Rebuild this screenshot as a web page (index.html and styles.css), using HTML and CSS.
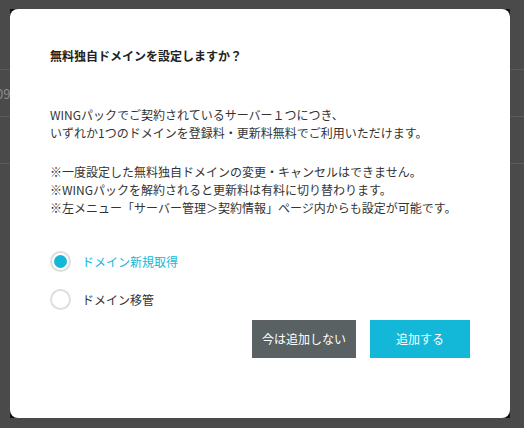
FILE: index.html
```html
<!DOCTYPE html>
<html>
    <head>
        <title>無料独自ドメイン設定</title>
        <meta charset="UTF-8">
        <link rel="stylesheet" href="styles.css">
    </head>
    <body>
        <div class="page">
            <div class="page-head"></div>
            <div class="page-row"><span class="cell">09:30</span></div>
            <div class="page-row"></div>
        </div>
        <div class="modal">
            <div class="modal-inner">
                <h2 class="modal-title">無料独自ドメインを設定しますか？</h2>
                <p class="modal-text">WINGパックでご契約されているサーバー１つにつき、<br>いずれか1つのドメインを登録料・更新料無料でご利用いただけます。</p>
                <p class="modal-text notes">※一度設定した無料独自ドメインの変更・キャンセルはできません。<br>※WINGパックを解約されると更新料は有料に切り替わります。<br>※左メニュー「サーバー管理＞契約情報」ページ内からも設定が可能です。</p>
                <ul class="choices">
                    <li class="choice checked"><span class="radio"></span>ドメイン新規取得</li>
                    <li class="choice"><span class="radio"></span>ドメイン移管</li>
                </ul>
                <div class="buttons">
                    <a href="#" class="btn btn-gray">今は追加しない</a>
                    <a href="#" class="btn btn-blue">追加する</a>
                </div>
            </div>
        </div>
    </body>
</html>
```

FILE: styles.css
```css
* {
    margin: 0;
    padding: 0;
    list-style: none;
    box-sizing: border-box;
}

body {
    width: 524px;
    height: 428px;
    overflow: hidden;
    position: relative;
    background-color: #4a4a4a;
    font-family: "Noto Sans CJK JP", "Noto Sans", sans-serif;
    font-size: 12px;
    color: #333;
}

/* 背景のページ */
.page-head {
    height: 70px;
    border-bottom: 1px solid #5a5a5a;
}

.page-row {
    height: 47px;
    border-bottom: 1px solid #5a5a5a;
    display: flex;
    align-items: center;
}

.page-row .cell {
    margin-left: -4px;
    color: #8a8a8a;
    font-size: 13px;
}

/* モーダル */
.modal {
    position: absolute;
    left: 10px;
    top: 9px;
    width: 500px;
    height: 409px;
    background-color: #111;
}

.modal-inner {
    height: 100%;
    background-color: #fff;
    border-radius: 8px;
    padding: 38px 40px 0;
    display: flex;
    flex-direction: column;
}

.modal-title {
    font-size: 12px;
    line-height: 18px;
    font-weight: bold;
    color: #222;
}

.modal-text {
    line-height: 18px;
    margin-top: 41px;
}

.modal-text.notes {
    margin-top: 21px;
}

.choices {
    margin-top: 33px;
}

.choice {
    display: flex;
    align-items: center;
    height: 22px;
    margin-bottom: 16px;
}

.choice:last-child {
    margin-bottom: 0;
}

.radio {
    width: 21px;
    height: 21px;
    margin-right: 11px;
    border: 2px solid #dedede;
    border-radius: 50%;
    display: flex;
    align-items: center;
    justify-content: center;
}

.choice.checked {
    color: #13b8d8;
}

.choice.checked .radio::after {
    content: "";
    width: 13px;
    height: 13px;
    border-radius: 50%;
    background-color: #13b8d8;
}

.buttons {
    margin-top: 10px;
    display: flex;
    justify-content: flex-end;
    gap: 14px;
}

.btn {
    display: block;
    height: 38px;
    line-height: 38px;
    text-align: center;
    color: #fff;
    text-decoration: none;
}

.btn-gray {
    width: 104px;
    background-color: #5a6162;
}

.btn-blue {
    width: 100px;
    background-color: #13b8d8;
}
```
